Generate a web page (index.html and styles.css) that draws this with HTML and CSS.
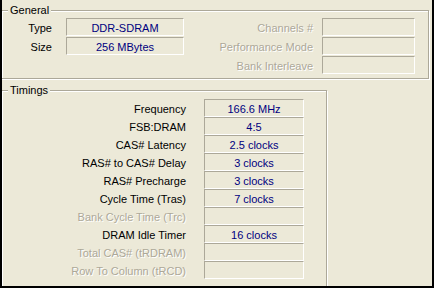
FILE: index.html
```html
<!DOCTYPE html>
<html>
<head>
<meta charset="utf-8">
<link rel="stylesheet" href="styles.css">
</head>
<body>
<div class="window">
  <div class="group general">
    <div class="legend">General</div>
    <div class="ggrid">
      <div class="lbl l1">Type</div>
      <div class="val">DDR-SDRAM</div>
      <div class="lbl l2 dis">Channels #</div>
      <div class="val"></div>

      <div class="lbl l1">Size</div>
      <div class="val">256 MBytes</div>
      <div class="lbl l2 dis">Performance Mode</div>
      <div class="val"></div>

      <div class="lbl l1"></div>
      <div></div>
      <div class="lbl l2 dis">Bank Interleave</div>
      <div class="val"></div>
    </div>
  </div>
  <div class="group timings">
    <div class="legend">Timings</div>
    <div class="tgrid">
      <div class="lbl">Frequency</div><div class="val">166.6 MHz</div>
      <div class="lbl">FSB:DRAM</div><div class="val">4:5</div>
      <div class="lbl">CAS# Latency</div><div class="val">2.5 clocks</div>
      <div class="lbl">RAS# to CAS# Delay</div><div class="val">3 clocks</div>
      <div class="lbl">RAS# Precharge</div><div class="val">3 clocks</div>
      <div class="lbl">Cycle Time (Tras)</div><div class="val">7 clocks</div>
      <div class="lbl dis">Bank Cycle Time (Trc)</div><div class="val"></div>
      <div class="lbl">DRAM Idle Timer</div><div class="val">16 clocks</div>
      <div class="lbl dis">Total CAS# (tRDRAM)</div><div class="val"></div>
      <div class="lbl dis">Row To Column (tRCD)</div><div class="val"></div>
    </div>
  </div>
</div>
</body>
</html>
```

FILE: styles.css
```css
html, body {
  margin: 0;
  padding: 0;
  background: #000;
}
.window {
  width: 434px;
  height: 288px;
  box-sizing: border-box;
  border: 2px solid #000;
  border-top: 0;
  background: #ECE9D8;
  overflow: hidden;
  font-family: "Liberation Sans", Arial, sans-serif;
  font-size: 11px;
  color: #000;
}
.group {
  border: 1px solid #ACA899;
  box-shadow: 1px 1px 0 #fff, inset 1px 1px 0 #fff;
  margin-left: -1px;
}
.general {
  margin-top: 10px;
  width: 428px;
  height: 69px;
  box-sizing: border-box;
}
.timings {
  margin-top: 11px;
  width: 326px;
  height: 220px;
  box-sizing: border-box;
}
.legend {
  display: table;
  margin: -7px 0 0 6px;
  padding: 0 2px;
  height: 13px;
  line-height: 13px;
  background: #ECE9D8;
}
.ggrid {
  display: grid;
  grid-template-columns: 64px 118px 138px 93px;
  grid-auto-rows: 18px;
  row-gap: 1px;
  margin-top: 1px;
}
.tgrid {
  display: grid;
  grid-template-columns: 202px 100px;
  grid-auto-rows: 18px;
  margin-top: 2px;
}
.lbl {
  text-align: right;
  line-height: 18px;
  padding-top: 1px;
  white-space: nowrap;
  box-sizing: border-box;
}
.l1 { padding-right: 14px; }
.l2 { padding-right: 9px; }
.tgrid .lbl { padding-right: 18px; }
.dis {
  color: #ACA899;
  text-shadow: 1px 1px 0 #fff;
}
.val {
  box-sizing: border-box;
  height: 18px;
  border: 1px solid;
  border-color: #ACA899 #fff #fff #ACA899;
  text-align: center;
  color: #000080;
  line-height: 16px;
  padding-top: 1px;
  white-space: nowrap;
}
```
